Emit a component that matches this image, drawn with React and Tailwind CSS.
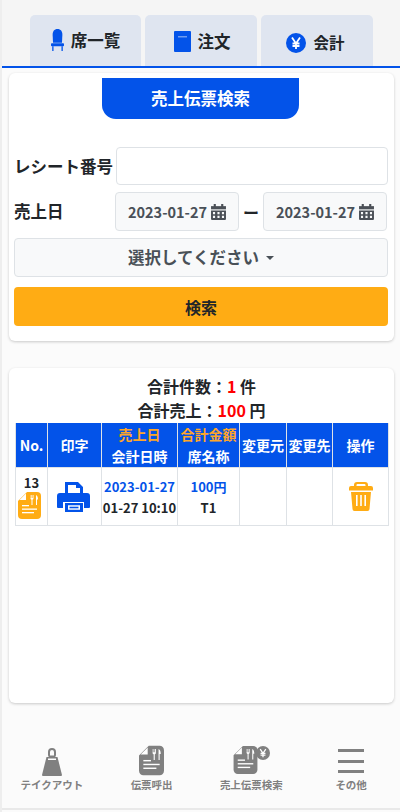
import React from "react";

function Chair() {
  return (
    <svg width="13" height="22" viewBox="0 0 16 23" fill="#0353e9" preserveAspectRatio="none">
      <path d="M2 6c0-3.500 2-6 6-6s6 2.500 6 6l-.5 8.500h-11z" />
      <rect x="0" y="15" width="16" height="3" rx="1" />
      <rect x="1.500" y="18" width="1.600" height="5" />
      <rect x="12.900" y="18" width="1.600" height="5" />
    </svg>
  );
}

function Book() {
  return (
    <svg width="17" height="21" viewBox="0 0 17 21">
      <rect width="17" height="21" rx="1" fill="#0353e9" />
      <rect x="4" y="5" width="9" height="1.500" fill="#6f9cf0" />
    </svg>
  );
}

function Yen({ size = 20, bg = "#0353e9" }) {
  return (
    <svg width={size} height={size} viewBox="0 0 20 20">
      <circle cx="10" cy="10" r="10" fill={bg} />
      <path d="M6 4.500l4 6 4-6M10 10.500V16M6.500 10.500h7M6.500 13h7" fill="none" stroke="#fff" strokeWidth="1.800" />
    </svg>
  );
}

function Calendar({ color = "#4b5057" }) {
  return (
    <svg width="15" height="16" viewBox="0 0 14 15" fill={color}>
      <rect x="2.500" y="0" width="2" height="3" />
      <rect x="9.500" y="0" width="2" height="3" />
      <path d="M0 2h14v3H0z" />
      <path fillRule="evenodd" d="M0 6h14v8a1 1 0 0 1-1 1H1a1 1 0 0 1-1-1zM1.800 7.500v2h2v-2zm4.200 0v2h2v-2zm4.200 0v2h2v-2zM1.800 11v2.200h2V11zm4.200 0v2.200h2V11zm4.200 0v2.200h2V11z" />
    </svg>
  );
}

function Printer() {
  return (
    <svg width="33" height="31" viewBox="0 0 33 31" fill="#0353e9">
      <path d="M8 1h13l5 5v6h-3V7h-4V4H11v8H8z" />
      <path fillRule="evenodd" d="M3 12h27a3 3 0 0 1 3 3v11a1 1 0 0 1-1 1h-5v-6H6v6H1a1 1 0 0 1-1-1V15a3 3 0 0 1 3-3z" />
      <path fillRule="evenodd" d="M8 22h18v9H8zm3 2.200v4.600h12v-4.600z" />
      <rect x="12.500" y="25.700" width="9" height="1.600" />
    </svg>
  );
}

function Slip({ color, w = 23, h = 27 }) {
  return (
    <svg width={w} height={h} viewBox="0 0 23 27">
      <path d="M9 0h10a4 4 0 0 1 4 4v19a4 4 0 0 1-4 4H4a4 4 0 0 1-4-4V9z" fill={color} />
      <path d="M8 1.500v6.500H1.500z" fill="#fff" />
      <path d="M12.500 3v3.500a1.500 1.500 0 0 0 1 1.300V13h1V7.800a1.500 1.500 0 0 0 1-1.300V3h-.8v3h-.6V3h-.7v3h-.6V3zM18 3c1.500.5 2 2.500 2 4.500h-1V13h-1z" fill="#fff" />
      <rect x="4" y="13" width="7" height="1.300" fill="#fff" />
      <rect x="4" y="16.500" width="15" height="1.300" fill="#fff" />
      <rect x="4" y="20" width="12" height="1.300" fill="#fff" />
    </svg>
  );
}

function Trash() {
  return (
    <svg width="24" height="29" viewBox="0 0 24 29" fill="#ffac14">
      <path fillRule="evenodd" d="M8 0h8a3 3 0 0 1 3 3v1h3a2 2 0 0 1 2 2v2.500H0V6a2 2 0 0 1 2-2h3V3a3 3 0 0 1 3-3zm-.5 4h9V3a1 1 0 0 0-1-1h-7a1 1 0 0 0-1 1z" />
      <path fillRule="evenodd" d="M2 10h20l-1.500 17a2 2 0 0 1-2 2h-13a2 2 0 0 1-2-2zM7 13v11h1.600V13zm4.200 0v11h1.600V13zm4.200 0v11H17V13z" />
    </svg>
  );
}

function Bag() {
  return (
    <svg width="20" height="28" viewBox="0 0 20 28" fill="#808080">
      <path fillRule="evenodd" d="M10 0a4 4 0 0 1 4 4v3c0 .8-.3 1.500-.8 2H15.500L20 27a1 1 0 0 1-1 1H1a1 1 0 0 1-1-1L4.500 9h2.300a3 3 0 0 1-.8-2V4a4 4 0 0 1 4-4zM8 4v3.500h4V4a2 2 0 0 0-4 0z" />
      <path d="M6 10.500h8V12H6z" fill="#fff" />
    </svg>
  );
}

function TopTab({ icon, label, className }) {
  return (
    <div className={`flex h-[51px] items-center justify-center rounded-t-[5px] bg-[#dfe5f0] font-bold text-[#212529] ${className}`}>
      {icon}
      <span>{label}</span>
    </div>
  );
}

function DateBox() {
  return (
    <div className="flex h-[39px] w-[124px] items-center justify-center gap-[4px] rounded-[4px] border border-[#dee2e6] bg-[#f8f9fa] text-[14.5px] font-bold text-[#495057]">
      <span>2023-01-27</span>
      <Calendar />
    </div>
  );
}

function NavItem({ icon, label }) {
  return (
    <div className="flex flex-1 flex-col items-center">
      <div className="flex h-[31px] items-end justify-center">{icon}</div>
      <span className="mt-[2px] text-[10.5px] font-bold leading-[14px] text-[#808080]">{label}</span>
    </div>
  );
}

const th = "border-x border-[#dee2e6] bg-[#0353e9] p-0 align-middle text-[14px] font-bold leading-[22px] text-white";
const td = "border border-[#dee2e6] p-0 align-middle text-center text-[13px] font-bold";

export default function App() {
  return (
    <div className="flex h-[812px] w-[400px] flex-col overflow-hidden border-l-2 border-[#eeeeee] bg-[#fbfbfb] font-['Noto_Sans_CJK_JP','Noto_Sans',sans-serif]">
      <header className="flex h-[68px] shrink-0 items-end gap-[4px] border-b-2 border-[#0353e9] bg-[#f5f5f5] pl-[28px]">
        <TopTab className="w-[111px] gap-[7px] pb-[1px] text-[16.5px]" icon={<Chair />} label="席一覧" />
        <TopTab className="w-[112px] gap-[7px] pl-[2px] pt-[2px] text-[16.5px]" icon={<Book />} label="注文" />
        <TopTab className="w-[112px] gap-[7px] pr-[3px] pt-[4px] text-[15.5px]" icon={<Yen />} label="会計" />
      </header>

      <main className="flex flex-1 flex-col pl-[7px] pr-[6px]">
        <section className="mt-[5px] flex h-[268px] flex-col rounded-[6px] bg-white px-[5px] shadow-[0_1px_3px_rgba(0,0,0,0.2)]">
          <div className="mx-auto mt-[5px] flex h-[41px] w-[197px] -translate-x-[1px] items-center justify-center rounded-b-[14px] bg-[#0353e9] text-[16.5px] font-bold text-white">
            売上伝票検索
          </div>

          <div className="mt-[28px] flex h-[38px] items-center justify-between">
            <span className="text-[16.5px] font-bold text-[#212529]">レシート番号</span>
            <div className="h-[38px] w-[272px] -translate-x-[1px] rounded-[4px] border border-[#dee2e6] bg-white" />
          </div>

          <div className="mt-[7px] flex h-[39px] items-center">
            <span className="w-[101px] text-[16.5px] font-bold text-[#212529]">売上日</span>
            <DateBox />
            <span className="w-[24px] text-center text-[16px] font-bold text-[#212529]">ー</span>
            <DateBox />
          </div>

          <div className="mt-[7px] flex h-[39px] w-[374px] items-center justify-center gap-[7px] rounded-[4px] border border-[#dee2e6] bg-[#f8f9fa] text-[16.5px] font-bold text-[#495057]">
            <span>選択してください</span>
            <span className="mt-[1px] h-0 w-0 border-x-[4px] border-t-[4px] border-x-transparent border-t-[#495057]" />
          </div>

          <div className="mt-[10px] flex h-[39px] w-[374px] items-center justify-center rounded-[4px] bg-[#ffac14] text-[16px] font-bold text-[#212529]">
            検索
          </div>
        </section>

        <section className="mt-[27px] h-[335px] rounded-[6px] bg-white px-[6px] pt-[6px] shadow-[0_1px_3px_rgba(0,0,0,0.2)]">
          <div className="text-center text-[16px] font-bold leading-[24px] text-[#212529]">
            <div>合計件数：<span className="text-[#ff0000]">1</span> 件</div>
            <div>合計売上：<span className="text-[#ff0000]">100</span> 円</div>
          </div>

          <table className="mt-[1px] w-[373px] table-fixed border-collapse text-center">
            <colgroup>
              <col className="w-[32px]" />
              <col className="w-[54px]" />
              <col className="w-[76px]" />
              <col className="w-[62px]" />
              <col className="w-[47px]" />
              <col className="w-[46px]" />
              <col className="w-[56px]" />
            </colgroup>
            <thead>
              <tr className="h-[44px]">
                <th className={th}>No.</th>
                <th className={th}>印字</th>
                <th className={th}>
                  <div className="text-[#ffa629]">売上日</div>
                  <div>会計日時</div>
                </th>
                <th className={th}>
                  <div className="text-[#ffa629]">合計金額</div>
                  <div>席名称</div>
                </th>
                <th className={th}>変更元</th>
                <th className={th}>変更先</th>
                <th className={th}>操作</th>
              </tr>
            </thead>
            <tbody>
              <tr className="h-[58px]">
                <td className={td}>
                  <div className="flex flex-col items-center pt-[3px] pb-[3px]">
                    <span className="text-[13px] leading-[18px] text-[#212529]">13</span>
                    <div className="mr-[5px]">
                      <Slip color="#ffac14" />
                    </div>
                  </div>
                </td>
                <td className={td}>
                  <div className="flex justify-center pr-[2px]">
                    <Printer />
                  </div>
                </td>
                <td className={td}>
                  <div className="leading-[21px] text-[#0353e9]">2023-01-27</div>
                  <div className="leading-[21px] text-[#212529]">01-27 10:10</div>
                </td>
                <td className={td}>
                  <div className="leading-[21px] text-[#0353e9]">100円</div>
                  <div className="leading-[21px] text-[#212529]">T1</div>
                </td>
                <td className={td} />
                <td className={td} />
                <td className={td}>
                  <div className="flex justify-center">
                    <Trash />
                  </div>
                </td>
              </tr>
            </tbody>
          </table>
        </section>

        <nav className="-mx-[7px] mt-[42px] flex">
          <NavItem icon={<Bag />} label="テイクアウト" />
          <NavItem icon={<Slip color="#808080" w={25} h={31} />} label="伝票呼出" />
          <NavItem
            icon={
              <div className="relative mb-[2px] mr-[12px]">
                <Slip color="#808080" w={25} h={28} />
                <div className="absolute -right-[12px] top-0">
                  <Yen size={14} bg="#808080" />
                </div>
              </div>
            }
            label="売上伝票検索"
          />
          <NavItem
            icon={
              <div className="mb-[3px] flex h-[24px] w-[26px] flex-col justify-between">
                <div className="h-[3px] bg-[#808080]" />
                <div className="h-[3px] bg-[#808080]" />
                <div className="h-[3px] bg-[#808080]" />
              </div>
            }
            label="その他"
          />
        </nav>
        <div className="-mx-[7px] mb-[2px] mt-auto border-b-2 border-[#e9e9e9]" />
      </main>
    </div>
  );
}
